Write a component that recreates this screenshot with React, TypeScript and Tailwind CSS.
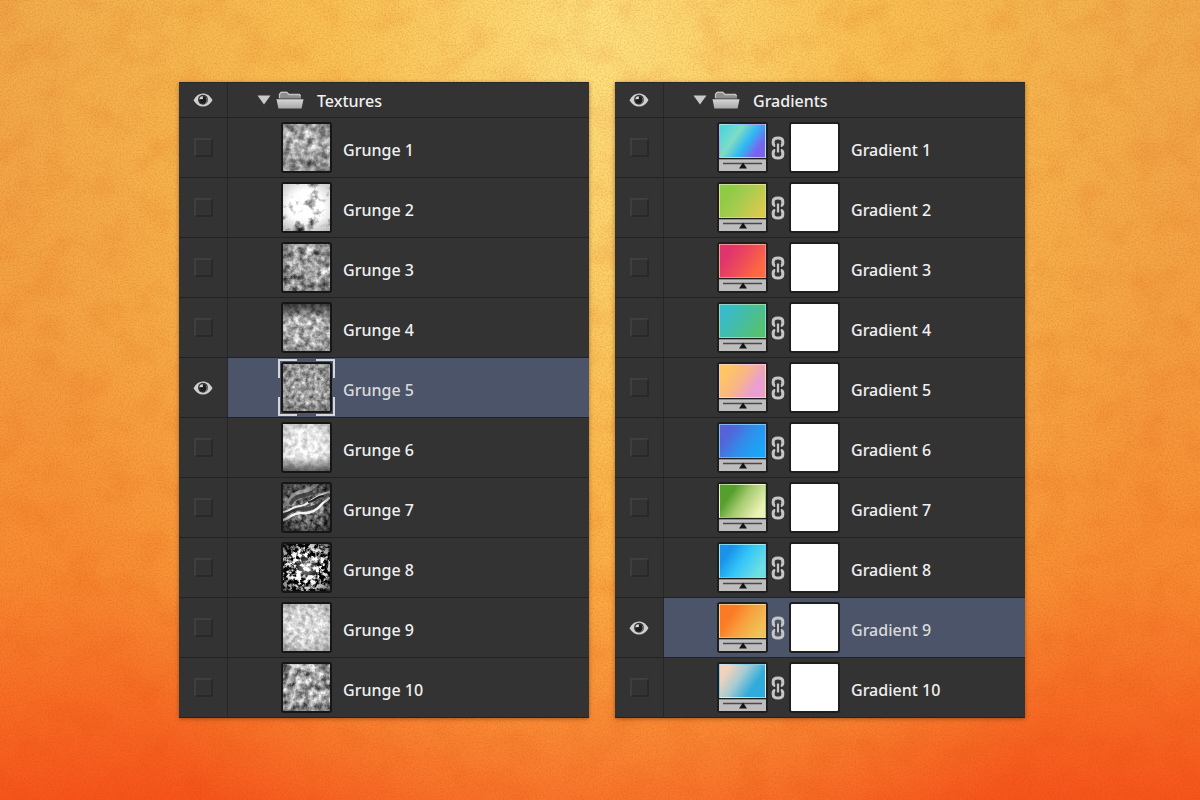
import { useState } from "react";
import type { ReactNode } from "react";

interface Grunge {
    name: string;
    seed: number;
    freq: string;
    contrast: number;
    offset: number;
    shade?: "top" | "edges" | "bottom" | "flow";
}

interface Gradient {
    name: string;
    swatch: string;
}

// gray = contrast * noise + offset
const grunges: Grunge[] = [
    { name: "Grunge 1", seed: 3, freq: "0.14", contrast: 1.1, offset: 0.08 },
    { name: "Grunge 2", seed: 8, freq: "0.08", contrast: 2.4, offset: -0.14 },
    { name: "Grunge 3", seed: 14, freq: "0.13", contrast: 1.4, offset: -0.08 },
    { name: "Grunge 4", seed: 21, freq: "0.18", contrast: 1.1, offset: 0.13, shade: "top" },
    { name: "Grunge 5", seed: 30, freq: "0.22", contrast: 0.9, offset: 0.16 },
    { name: "Grunge 6", seed: 37, freq: "0.2", contrast: 0.5, offset: 0.66, shade: "bottom" },
    { name: "Grunge 7", seed: 44, freq: "0.22", contrast: 1, offset: -0.12, shade: "flow" },
    { name: "Grunge 8", seed: 52, freq: "0.22", contrast: 4.5, offset: -1.8, shade: "edges" },
    { name: "Grunge 9", seed: 60, freq: "0.22", contrast: 0.6, offset: 0.54 },
    { name: "Grunge 10", seed: 75, freq: "0.15", contrast: 1.4, offset: -0.06 },
];

const gradients: Gradient[] = [
    { name: "Gradient 1", swatch: "bg-[linear-gradient(125deg,#4fd6dc_8%,#7fdcc4_35%,#2fb9f4_58%,#7a62ee_82%)]" },
    { name: "Gradient 2", swatch: "bg-[linear-gradient(125deg,#8fcb45_20%,#a8cc50_50%,#dcc94c_90%)]" },
    { name: "Gradient 3", swatch: "bg-[linear-gradient(125deg,#e0356c_20%,#ee4a5a_50%,#ff6a40_85%)]" },
    { name: "Gradient 4", swatch: "bg-[linear-gradient(125deg,#38bccb_15%,#46bda0_50%,#56c26c_90%)]" },
    { name: "Gradient 5", swatch: "bg-[linear-gradient(125deg,#ffc661_15%,#f9b48a_48%,#e99fd0_75%)]" },
    { name: "Gradient 6", swatch: "bg-[linear-gradient(125deg,#5463d8_20%,#2f8fec_55%,#18a8f8_90%)]" },
    { name: "Gradient 7", swatch: "bg-[linear-gradient(125deg,#55a02c_25%,#a5cb70_50%,#ecf2b4_85%)]" },
    { name: "Gradient 8", swatch: "bg-[linear-gradient(125deg,#1a92ea_20%,#34c6f8_50%,#6cdfe0_85%)]" },
    { name: "Gradient 9", swatch: "bg-[linear-gradient(125deg,#fb7a24_25%,#f79d3c_50%,#efc255_85%)]" },
    { name: "Gradient 10", swatch: "bg-[linear-gradient(125deg,#f3d3bb_15%,#a9cbd2_42%,#2facdc_72%)]" },
];

function Backdrop() {
    return (
        <svg className="absolute inset-0 size-full" aria-hidden="true">
            <filter id="grain" colorInterpolationFilters="sRGB">
                <feTurbulence type="fractalNoise" baseFrequency="0.6" numOctaves="2" seed="5" />
                <feColorMatrix values="0 0 0 0 .6  0 0 0 0 .25  0 0 0 0 0  1.5 0 0 0 -.6" />
            </filter>
            <filter id="blotch" colorInterpolationFilters="sRGB">
                <feTurbulence type="fractalNoise" baseFrequency="0.03" numOctaves="5" seed="11" />
                <feColorMatrix values="0 0 0 0 .85  0 0 0 0 .25  0 0 0 0 0  2 0 0 0 -.9" />
            </filter>
            <rect width="100%" height="100%" filter="url(#blotch)" opacity="0.12" />
            <rect width="100%" height="100%" filter="url(#grain)" opacity="0.25" />
        </svg>
    );
}

function Eye() {
    return (
        <svg viewBox="0 0 20 14" className="w-5 h-[14px] col-start-1 row-start-1 invisible peer-checked:visible pointer-events-none" aria-hidden="true">
            <path d="M0.5 7.2C3 2.600 6.200 .5 10 .5s7 2.100 9.500 6.700C17 11.500 13.800 13.500 10 13.500S3 11.500.5 7.200Z" fill="#cfcfcf" />
            <circle cx="10" cy="6.800" r="5" fill="#3a3a3a" />
            <circle cx="10" cy="7" r="3.500" fill="#1d1d1d" />
            <path d="M6.200 6.200A4.200 4.200 0 0 1 9.600 2.900L10 6Z" fill="#d8d8d8" />
            <path d="M13.500 5A4.200 4.200 0 0 1 12 10.800" fill="none" stroke="#8a8a8a" strokeWidth="1" />
        </svg>
    );
}

function Folder() {
    return (
        <svg viewBox="0 0 28 18" className="w-7 h-[18px]" aria-hidden="true">
            <defs>
                <linearGradient id="folder" x1="0" y1="0" x2="0" y2="1">
                    <stop offset="0" stopColor="#d6d6d6" />
                    <stop offset="1" stopColor="#a8a8a8" />
                </linearGradient>
            </defs>
            <path d="M3 7.500V3L5 .8h6L13 3h10.500L25 4.500v3Z" fill="#8e8e8e" />
            <path d="M3.500 7V3.200L5.200 1.300h5.600L13 3.500h10.300L24.500 5" fill="none" stroke="#c4c4c4" strokeWidth="1.300" />
            <path d="M.5 8.200h27L25.600 17.500H2.400Z" fill="url(#folder)" />
        </svg>
    );
}

function Chain() {
    return (
        <svg viewBox="0 0 14 24" className="w-[14px] h-6" fill="none" aria-hidden="true">
            <path d="M4.500 9.500H3.800Q2.200 9 2.200 7V5.500Q2.200 2 7 2t4.800 3.500V7q0 2-1.600 2.500H9.500" stroke="#c6c6c6" strokeWidth="3" />
            <path d="M4.500 14.500H3.800Q2.200 15 2.200 17v1.500Q2.200 22 7 22t4.800-3.500V17q0-2-1.600-2.500H9.500" stroke="#c6c6c6" strokeWidth="3" />
            <path d="M7 7.500v9" stroke="#1f1f1f" strokeWidth="5" />
            <path d="M7 7.500v9" stroke="#c6c6c6" strokeWidth="2.500" />
        </svg>
    );
}

function Brackets() {
    return (
        <svg viewBox="0 0 57 57" className="absolute -inset-[5px] size-[57px]" fill="none" stroke="#d4d6da" strokeWidth="2" aria-hidden="true">
            <path d="M1 19V1h18M38 1h18v18M56 38v18H38M19 56H1V38" />
        </svg>
    );
}

function GrungeThumb({ layer }: { readonly layer: Grunge }) {
    const id = `grunge-${layer.seed}`;
    const vignette = layer.shade === "edges" || layer.shade === "flow" ? 0.7 : 0.25;
    return (
        <svg viewBox="0 0 47 47" className="size-[47px]" aria-hidden="true">
            <defs>
                <filter id={id} x="0" y="0" width="1" height="1" colorInterpolationFilters="sRGB">
                    <feTurbulence type="fractalNoise" baseFrequency={layer.freq} numOctaves={5} seed={layer.seed} />
                    <feColorMatrix
                        values={`${layer.contrast} 0 0 0 ${layer.offset} ${layer.contrast} 0 0 0 ${layer.offset} ${layer.contrast} 0 0 0 ${layer.offset} 0 0 0 0 1`}
                    />
                </filter>
                <linearGradient id={`${id}-v`} x1="0" y1="0" x2="0" y2="1">
                    <stop offset="0" stopColor="#111" stopOpacity={layer.shade === "top" ? 0.7 : 0} />
                    <stop offset="0.35" stopColor="#111" stopOpacity="0" />
                    <stop offset="0.7" stopColor="#111" stopOpacity="0" />
                    <stop offset="1" stopColor="#111" stopOpacity={layer.shade === "bottom" ? 0.6 : 0.1} />
                </linearGradient>
                <radialGradient id={`${id}-r`} r="0.72">
                    <stop offset="0" stopColor="#fff" stopOpacity={layer.shade === "edges" ? 0.6 : 0.1} />
                    <stop offset="0.4" stopColor="#fff" stopOpacity="0" />
                    <stop offset="0.5" stopColor="#111" stopOpacity="0" />
                    <stop offset="1" stopColor="#111" stopOpacity={vignette} />
                </radialGradient>
            </defs>
            <rect width="47" height="47" filter={`url(#${id})`} />
            {layer.shade === "flow" && (
                <g fill="none" strokeLinecap="round">
                    <path d="M0 22C8 19 8 9 18 8s9-4 16-8" stroke="#b0b0b0" strokeWidth="4" opacity="0.7" />
                    <path d="M8 19c5-9 12-6 20-10" stroke="#3a3a3a" strokeWidth="4" opacity="0.8" />
                    <path d="M0 32c6-2 9-8 18-7s16-4 28-9" stroke="#333" strokeWidth="3" />
                    <path d="M0 28c8-1 10-6 17-6s9-5 14-7 7-6 15-7" stroke="#ededed" strokeWidth="2" />
                    <path d="M0 36c8-2 10-8 19-7s16-4 19-8 5-3 8-7" stroke="#f4f4f4" strokeWidth="2.500" />
                    <path d="M26 18c6-1 8-6 14-6" stroke="#1c1c1c" strokeWidth="2" />
                </g>
            )}
            <rect width="47" height="47" fill={`url(#${id}-v)`} />
            <rect width="47" height="47" fill={`url(#${id}-r)`} />
        </svg>
    );
}

function GradientThumb({ layer }: { readonly layer: Gradient }) {
    return (
        <div className="flex flex-col gap-px size-[47px]">
            <div className={`h-[34px] border border-white/40 ${layer.swatch}`} />
            <svg viewBox="0 0 47 12" className="w-[47px] h-3" aria-hidden="true">
                <rect width="47" height="12" fill="#bdbdbd" />
                <path d="M0 .5h47" stroke="#8a8a8a" />
                <path d="M4 4.500h39" stroke="#4a4a4a" strokeWidth="1.500" />
                <path d="M20 9.500 24 3.500l4 6Z" fill="#151515" />
            </svg>
        </div>
    );
}

function Visibility({ name, defaultChecked }: { readonly name: string; readonly defaultChecked?: boolean }) {
    return (
        <label className="w-[49px] shrink-0 grid place-items-center border-r border-[#272727] cursor-pointer">
            <input
                type="checkbox"
                aria-label={`Show ${name}`}
                defaultChecked={defaultChecked}
                className="peer appearance-none size-[19px] col-start-1 row-start-1 cursor-pointer
                           border-2 border-t-[#3f3f3f] border-l-[#3f3f3f] border-r-[#292929] border-b-[#292929]
                           checked:border-transparent"
            />
            <Eye />
        </label>
    );
}

interface PanelProps {
    readonly title: string;
    readonly open: boolean;
    readonly onToggle: () => void;
    readonly children: ReactNode;
}

function Panel({ title, open, onToggle, children }: PanelProps) {
    return (
        <section className="min-w-0 bg-[#333333] shadow-[0_1px_4px_rgba(90,40,0,0.5)]">
            <header className="flex h-9 border-t border-t-[#26292c] border-b border-b-[#222222]">
                <Visibility name={title} defaultChecked />
                <div className="flex items-center pl-[29px]">
                    <button type="button" onClick={onToggle} aria-expanded={open} aria-label={`Toggle ${title}`} className="cursor-pointer">
                        <svg viewBox="0 0 14 10" className="w-[14px] h-[10px]" aria-hidden="true">
                            <path d="M.5 .5h13L7 9.500Z" fill="#c9c9c9" />
                        </svg>
                    </button>
                    <div className="ml-[5px]"><Folder /></div>
                    <h2 className="ml-[13px] pt-[2px]">{title}</h2>
                </div>
            </header>
            {open && <ul>{children}</ul>}
        </section>
    );
}

interface RowProps {
    readonly name: string;
    readonly selected: boolean;
    readonly children: ReactNode;
}

function Row({ name, selected, children }: RowProps) {
    return (
        <li className="flex h-[60px] border-b border-[#222222]">
            <Visibility name={name} defaultChecked={selected} />
            <div className={`flex flex-1 min-w-0 items-center pl-[53px] ${selected ? "bg-[#4b5469]" : ""}`}>
                {children}
                <span className={`ml-[11px] pt-1 whitespace-nowrap ${selected ? "text-[#dadada]" : ""}`}>{name}</span>
            </div>
        </li>
    );
}

function App() {
    const [texturesOpen, setTexturesOpen] = useState(true);
    const [gradientsOpen, setGradientsOpen] = useState(true);

    return (
        <main
            className="relative min-h-screen pt-[82px] pb-20 pl-1
                       bg-[radial-gradient(ellipse_50%_125%_at_50%_5%,#ffe280_0%,rgba(255,208,90,0.6)_45%,rgba(255,190,80,0)_100%),linear-gradient(to_bottom,#f2ac4c_0%,#f5a042_40%,#f98a32_72%,#f8541c_100%)]
                       font-['Noto_Sans','Open_Sans',sans-serif] text-base font-medium text-[#f0f0f0]"
        >
            <Backdrop />
            <div className="relative grid grid-cols-2 items-start gap-[26px] max-w-[846px] mx-auto">
                <Panel title="Textures" open={texturesOpen} onToggle={() => setTexturesOpen(open => !open)}>
                    {grunges.map(layer => (
                        <Row key={layer.name} name={layer.name} selected={layer.name === "Grunge 5"}>
                            <div className="relative border-2 border-[#161616] rounded-[3px] bg-[#161616]">
                                <GrungeThumb layer={layer} />
                                {layer.name === "Grunge 5" && <Brackets />}
                            </div>
                        </Row>
                    ))}
                </Panel>
                <Panel title="Gradients" open={gradientsOpen} onToggle={() => setGradientsOpen(open => !open)}>
                    {gradients.map(layer => (
                        <Row key={layer.name} name={layer.name} selected={layer.name === "Gradient 9"}>
                            <div className="border-2 border-[#1e1e1e] rounded-[3px] bg-[#1e1e1e]">
                                <GradientThumb layer={layer} />
                            </div>
                            <button type="button" aria-label={`Link mask of ${layer.name}`} className="ml-[3px] mr-1 cursor-pointer">
                                <Chain />
                            </button>
                            <div className="size-[51px] border-2 border-[#1e1e1e] rounded-[3px] bg-white" />
                        </Row>
                    ))}
                </Panel>
            </div>
        </main>
    );
}

export default App;
